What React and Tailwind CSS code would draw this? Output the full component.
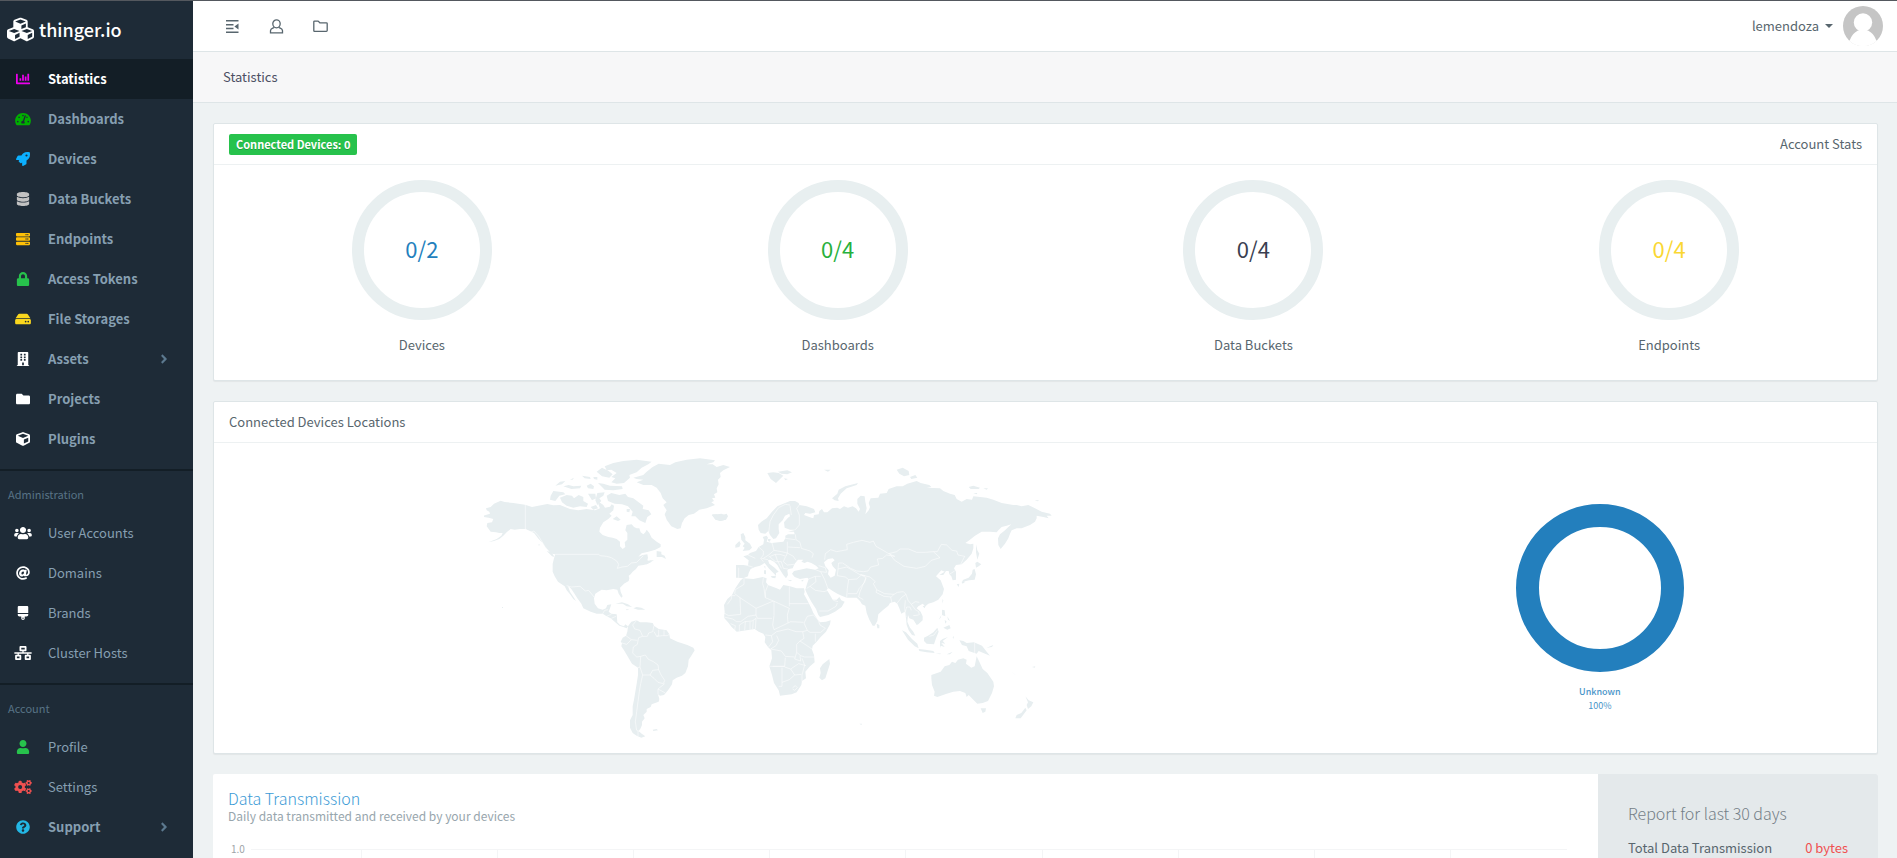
import {
  FaChartBar, FaTachometerAlt, FaRocket, FaDatabase, FaServer, FaLock, FaHdd, FaBuilding, FaFolder,
  FaCube, FaUsers, FaAt, FaBrush, FaNetworkWired, FaUser, FaCogs, FaQuestionCircle, FaAngleRight, FaCubes,
} from "react-icons/fa";

const groups = [
  {
    items: [
      { label: "Statistics", icon: FaChartBar, color: "text-[#ee00ee]", bold: true, active: true },
      { label: "Dashboards", icon: FaTachometerAlt, color: "text-[#00b000]", bold: true },
      { label: "Devices", icon: FaRocket, color: "text-[#0bb0ff]", bold: true },
      { label: "Data Buckets", icon: FaDatabase, color: "text-[#c2c2c2]", bold: true },
      { label: "Endpoints", icon: FaServer, color: "text-[#ffc107]", bold: true },
      { label: "Access Tokens", icon: FaLock, color: "text-[#27c24c]", bold: true },
      { label: "File Storages", icon: FaHdd, color: "text-[#fad71e]", bold: true },
      { label: "Assets", icon: FaBuilding, color: "text-white", bold: true, more: true },
      { label: "Projects", icon: FaFolder, color: "text-white", bold: true },
      { label: "Plugins", icon: FaCube, color: "text-white", bold: true },
    ],
  },
  {
    title: "Administration",
    items: [
      { label: "User Accounts", icon: FaUsers, color: "text-white" },
      { label: "Domains", icon: FaAt, color: "text-white" },
      { label: "Brands", icon: FaBrush, color: "text-white" },
      { label: "Cluster Hosts", icon: FaNetworkWired, color: "text-white" },
    ],
  },
  {
    title: "Account",
    items: [
      { label: "Profile", icon: FaUser, color: "text-[#27c24c]" },
      { label: "Settings", icon: FaCogs, color: "text-[#f05050]" },
      { label: "Support", icon: FaQuestionCircle, color: "text-[#23b7e5]", bold: true, more: true },
    ],
  },
];

const stats = [
  { label: "Devices", value: "0/2", color: "text-[#237fbd]" },
  { label: "Dashboards", value: "0/4", color: "text-[#27b03c]" },
  { label: "Data Buckets", value: "0/4", color: "text-[#3a3f51]" },
  { label: "Endpoints", value: "0/4", color: "text-[#fad733]" },
];

function NavItem({ item }) {
  const Icon = item.icon;
  return (
    <li>
      <a
        href="#"
        aria-current={item.active ? "page" : undefined}
        className={`flex h-10 items-center text-[13px] ${item.active ? "bg-[#131e26] text-white" : "text-[#869fb1]"} ${item.bold ? "font-bold" : ""}`}
      >
        <span className={`flex w-[46px] justify-center ${item.color}`}>
          <Icon className="h-3.5 w-[18px]" />
        </span>
        <span className="ml-0.5 flex-1">{item.label}</span>
        {item.more && <FaAngleRight size={14} className="mr-[22px] text-[#5c798f]" />}
      </a>
    </li>
  );
}

function Sidebar() {
  return (
    <nav className="w-[193px] shrink-0 overflow-hidden bg-[#1e2b37]">
      <a href="#" className="flex h-[58px] items-center gap-[5px] pb-0.5 pl-[7px] text-white">
        <FaCubes size={27} />
        <span className="text-[18px] font-medium">thinger.io</span>
      </a>
      {groups.map((group, i) => (
        <div key={i} className={i ? "mt-2.5 border-t-2 border-[#131e26]" : ""}>
          {group.title && (
            <h2 className="flex h-[42px] items-center px-2 pt-1 text-[11px] text-[#587386]">{group.title}</h2>
          )}
          <ul>
            {group.items.map((item) => (
              <NavItem key={item.label} item={item} />
            ))}
          </ul>
        </div>
      ))}
    </nav>
  );
}

function Header() {
  return (
    <header className="flex h-[51px] shrink-0 items-center justify-between border-b border-[#dee5e7] bg-white pr-3.5 pl-8 text-[#58666e]">
      <div className="flex items-center gap-[29px]">
        <button type="button" aria-label="Collapse menu">
          <svg width="15" height="15" viewBox="0 0 15 15" fill="currentColor">
            <path d="M1 1h12.5v1.4H1zM1 5h7.5v1.4H1zM1 8.8h7.5v1.4H1zM1 12.6h12.5V14H1zM13.5 4.6v6L9.4 7.6z" />
          </svg>
        </button>
        <button type="button" aria-label="User">
          <svg width="15" height="15" viewBox="0 0 15 15" fill="none" stroke="currentColor" strokeWidth="1.3">
            <ellipse cx="7.5" cy="4.8" rx="3.7" ry="4" />
            <path d="M5.2 8.2C4.6 9.4 1.7 9.2 1.5 11.6v2.2h12v-2.2c-.2-2.4-3.1-2.2-3.7-3.4" />
          </svg>
        </button>
        <button type="button" aria-label="Files">
          <svg width="15" height="15" viewBox="0 0 15 15" fill="none" stroke="currentColor" strokeWidth="1.3" strokeLinejoin="round">
            <path d="M.8 2.9q0-.8.8-.8h3.6l1.6 1.7h6.6q.8 0 .8.8v7q0 .8-.8.8H1.6q-.8 0-.8-.8z" />
          </svg>
        </button>
      </div>
      <button type="button" className="flex items-center gap-2.5 text-[13px]">
        <span className="flex items-center gap-1.5">
          lemendoza
          <svg width="8" height="4" viewBox="0 0 8 4" fill="currentColor"><path d="M0 0h8L4 4z" /></svg>
        </span>
        <svg width="40" height="40" viewBox="0 0 40 40">
          <defs><clipPath id="avatar"><circle cx="20" cy="20" r="20" /></clipPath></defs>
          <g clipPath="url(#avatar)">
            <rect width="40" height="40" fill="#c5c5c5" />
            <circle cx="20" cy="16.5" r="9.2" fill="#fff" />
            <path d="M6.5 35C8.5 29 12 26 15 24.5h10c3 1.500 6.500 4.500 8.500 10.500V40h-27z" fill="#fff" />
            <path d="M0 34.500h40V40H0z" fill="#fff" />
          </g>
        </svg>
      </button>
    </header>
  );
}

function Gauge({ stat }) {
  return (
    <div className="flex flex-col items-center gap-3.5">
      <div className={`flex size-[140px] items-center justify-center rounded-full border-12 border-[#e8eff0] pb-1 text-[22px] ${stat.color}`}>
        {stat.value}
      </div>
      <span className="text-[13px] leading-[22px]">{stat.label}</span>
    </div>
  );
}

function WorldMap() {
  return (
    <svg className="h-[280px] w-[568px]" viewBox="42 39 1704 840" fill="#e7eef0" fillRule="evenodd" role="img" aria-label="World map">
      <path d="M40 212L60 206 58 200 50 196 48 190 62 186 72 176 92 167 104 171 130 174 165 179 186 186 205 182 232 177 250 181 270 180 285 186 300 192 325 196 350 192 375 196 390 190 385 178 388 172 400 180 405 188 420 185 425 178 432 182 430 196 418 206 425 212 415 222 400 232 390 248 388 260 398 270 415 276 428 278 440 282 450 290 450 304 458 312 466 306 464 292 472 284 472 264 466 256 470 240 485 238 492 246 500 250 508 250 512 262 520 268 526 262 530 254 538 264 545 278 560 290 572 298 572 306 556 314 535 320 515 325 505 335 518 330 532 328 534 338 532 346 545 350 550 348 530 358 520 360 505 362 498 372 488 380 482 388 476 392 478 400 476 408 462 416 450 428 452 440 458 454 454 458 446 446 442 434 430 432 418 434 410 436 395 434 385 440 376 446 372 460 374 476 384 490 398 494 408 490 412 480 424 478 420 490 416 500 424 506 440 508 441 520 442 532 450 540 462 544 466 538 474 544 470 550 460 546 448 542 434 530 422 520 410 514 398 506 380 506 362 500 340 490 334 476 322 460 312 444 304 432 298 426 294 424 300 440 312 458 318 468 310 462 300 448 290 436 284 424 264 410 254 394 248 380 248 356 252 340 256 328 246 326 236 318 228 310 218 294 206 282 192 264 180 258 166 252 150 252 134 254 122 252 110 262 100 272 88 282 72 288 55 292 80 282 94 272 98 264 88 264 78 262 62 260 56 252 50 244 52 234 66 232 70 222 56 218 42 216z" />
      <path d="M474 544L484 530 500 526 510 532 530 532 548 534 552 542 566 552 590 556 598 568 600 580 622 590 652 600 670 608 674 616 664 632 656 644 654 664 646 684 636 692 620 698 608 706 606 718 594 736 582 750 570 752 564 748 568 762 566 770 545 778 542 786 530 792 530 800 520 810 524 820 516 830 516 840 512 850 506 858 515 866 526 874 514 878 500 872 488 864 480 848 480 826 488 810 488 784 492 764 496 740 500 716 504 690 504 668 486 656 474 636 462 616 454 604 456 594 452 590 458 578 468 572 472 560z" />
      <path d="M490 98L520 90 530 80 548 66 566 56 600 60 616 52 650 44 690 40 735 46 730 52 710 58 728 58 740 66 760 60 780 66 760 76 750 84 752 96 744 104 746 118 740 130 742 142 732 148 736 158 726 160 732 168 724 172 735 180 710 190 688 194 672 206 656 210 644 220 636 234 632 250 622 252 604 244 590 224 584 208 590 196 580 180 590 172 578 160 572 144 560 128 545 120 520 120 500 112 520 104 500 102z" />
      <path d="M404 64L430 54 460 48 500 44 545 50 535 58 515 68 500 82 478 90 480 98 462 114 440 116 424 112 436 100 424 96 440 84 424 74 410 76zM380 80L396 68 416 78 428 88 418 98 396 94zM384 114L400 116 420 122 456 124 458 132 430 136 404 134 396 126zM410 152L424 144 448 150 466 146 474 156 490 160 504 170 520 182 518 192 536 196 544 208 532 216 526 234 508 226 496 214 484 214 488 200 474 184 456 178 434 176 414 168zM428 222L440 214 452 224 444 228zM470 192L480 192 478 202 470 200zM242 152L250 138 280 142 286 148 268 152 256 168 240 164zM270 158L290 150 306 152 312 160 326 150 340 156 340 168 354 176 350 186 330 184 310 188 290 182 276 172zM256 122L270 110 286 108 276 118zM280 124L296 120 310 124 334 122 330 130 304 132zM300 104L312 98 308 104zM336 92L360 96 362 102 344 100zM350 122L362 116 372 124 370 132 354 130zM354 146L376 146 378 160 366 166zM382 144L404 142 400 152 388 160 394 168 382 180 376 166zM370 96L382 96 382 104 372 102zM362 186L378 180 384 190 370 194zM725 210L740 208 750 212 770 206 774 214 768 224 750 228 736 224 730 216zM560 318L574 320 574 328 584 332 588 342 576 336 560 336zM524 354L540 346 552 346 530 358zM436 476L456 472 474 478 486 486 470 484 458 476zM490 490L500 486 514 488 526 494 504 494zM468 492L478 494 470 496zM548 854L560 852 564 856 550 858zM206 296L210 300 206 302zM96 486h3v3h-3zM230 318L244 322 254 336 246 334z" />
      <g transform="translate(690)">
        <path d="M174 240L184 230 200 220 216 200 232 184 250 176 270 168 285 168 296 174 298 180 320 184 342 192 346 202 330 206 316 204 312 210 322 214 334 218 340 220 342 210 356 208 358 198 366 192 372 202 382 202 396 190 412 188 420 192 432 184 444 188 458 184 468 190 476 200 480 192 472 176 472 162 482 152 494 154 496 170 500 190 496 208 506 196 510 186 506 174 512 160 535 158 540 146 560 144 566 132 590 124 608 124 622 116 650 108 662 114 688 120 694 126 680 128 720 130 730 138 750 146 764 150 770 162 785 170 800 162 816 164 820 154 860 158 880 164 905 174 940 180 950 180 965 184 985 180 1005 190 1025 200 1050 206 1055 212 1040 212 1046 220 1030 216 1010 212 1010 220 1005 230 990 240 965 250 950 250 935 256 930 266 925 280 915 296 902 312 895 300 894 280 900 268 915 256 925 246 934 238 920 242 905 246 895 256 890 262 870 260 845 260 825 272 808 286 796 294 810 298 820 296 820 310 815 326 800 344 785 358 768 360 762 370 768 380 768 404 758 406 754 394 748 388 746 378 738 378 730 390 718 390 734 380 724 376 708 394 722 406 732 432 728 448 715 464 700 472 685 476 676 484 668 476 655 484 650 490 662 500 668 514 668 526 655 538 650 540 640 524 628 520 624 510 622 530 630 548 640 560 646 572 636 570 626 556 620 540 618 520 614 500 604 506 598 490 592 476 584 470 570 474 565 482 550 494 535 508 532 528 524 542 518 542 508 524 500 504 496 482 486 478 480 468 470 458 440 458 425 452 412 446 398 438 386 430 380 434 390 450 398 464 410 464 418 456 424 466 434 470 425 486 405 500 385 510 360 516 355 510 348 492 334 470 322 448 316 434 320 420 326 402 322 398 300 402 284 396 276 386 282 378 300 374 320 370 345 374 356 370 348 362 334 354 322 350 314 354 304 350 310 344 294 344 284 356 278 370 266 372 262 376 264 390 258 400 250 390 240 374 232 360 222 350 210 344 204 346 208 356 224 368 236 380 228 384 228 392 220 384 206 370 194 354 180 362 165 366 152 372 146 384 144 394 130 400 116 398 108 398 108 380 108 360 130 360 144 362 146 346 130 334 144 330 150 324 168 318 176 306 190 298 192 284 188 276 200 272 204 278 200 290 215 294 235 292 250 290 256 280 256 272 264 268 284 268 282 260 264 260 288 254 270 254 254 248 252 232 264 218 270 214 268 206 255 212 248 226 236 238 236 252 238 264 228 280 220 282 210 270 205 258 196 266 182 264 176 254zM372 352L384 342 398 340 404 346 394 354 398 364 408 374 404 392 392 398 384 388 386 376 376 364z" />
        <path d="M122 406L130 400 160 402 188 396 200 400 198 412 204 420 230 430 240 434 250 420 270 424 290 430 312 430 314 440 312 448 322 466 334 490 340 504 352 522 360 532 378 530 392 526 390 538 378 560 362 576 350 590 338 602 336 614 342 630 344 652 330 664 316 680 318 700 306 708 304 720 290 742 275 748 240 752 236 736 222 714 216 690 208 664 216 640 214 616 204 606 194 592 196 576 190 566 176 560 164 552 140 556 110 560 95 546 84 532 72 518 74 500 72 480 82 462 96 450 106 430z" />
        <path d="M388 642L390 656 376 700 366 706 358 698 362 684 360 670 368 658zM694 700L694 690 722 680 734 664 748 660 756 650 766 654 774 644 790 640 800 644 798 656 814 668 824 664 830 634 838 650 848 672 862 684 880 710 882 724 876 744 864 768 848 774 832 776 820 764 806 750 800 756 796 744 780 738 760 740 740 746 712 756 702 752 704 740 696 720zM842 790L858 790 856 800 848 804zM976 754L986 766 1000 772 994 784 984 792 980 780 984 772zM976 788L980 796 962 820 946 820 950 810 964 804zM202 84L220 82 236 84 250 92 238 104 228 114 212 102zM234 80L262 76 276 82 262 88 244 86zM252 100L264 102 256 106zM372 74L392 74 384 80zM396 160L412 146 416 134 436 124 474 114 470 120 440 130 422 146 414 160 416 168 404 166zM590 74L608 68 626 78 628 90 612 94 598 86zM630 96L646 90 652 98 634 102zM806 126L820 122 840 128 836 132 812 132zM850 130L864 130 860 134zM820 144L832 144 830 148zM1004 166L1018 166 1012 169zM36 208L52 208 64 206 82 212 76 224 62 228 46 222zM122 268L130 264 136 276 136 286 150 296 156 308 148 316 128 318 134 308 128 304 134 296 124 284zM106 300L118 288 122 296 118 306 106 308zM204 282L212 282 210 290 204 288zM212 394L228 392 226 400 216 398zM192 376L198 376 198 388 192 386zM192 364L196 364 196 372zM262 404L276 406 272 409zM304 406L312 404 306 410zM828 298L832 316 838 326 832 344 828 322zM826 354L832 350 844 358 836 364 828 368zM824 372L828 388 824 404 808 406 798 408 784 412 790 404 806 398 816 386 818 374zM770 418L778 416 776 426zM784 410L796 410 788 416zM668 484L678 480 674 490zM728 462L730 466 726 476zM530 536L538 540 538 550 532 550zM606 556L618 562 636 582 652 596 656 610 644 604 624 584zM656 612L676 614 700 618 704 624 680 622 658 618zM672 578L684 572 700 562 712 548 716 560 708 580 702 598 680 596 672 588zM726 494L734 496 736 514 726 510zM742 514L750 528 744 524zM730 548L748 540 752 550 742 554zM734 524L740 530 736 536zM724 510L722 518 716 524zM720 588L728 582 744 576 728 588 736 596 724 594 734 606 722 602 720 610zM778 586L790 588 800 594 822 592 846 602 860 620 870 632 850 624 836 618 830 626 806 618 800 604 786 600zM706 624L724 626 720 628zM740 628L758 620 750 628zM758 576L762 574 760 582zM764 596L774 596zM860 608L880 600 876 606zM888 608L894 612zM934 680L948 690 944 688zM996 666L1006 664 1004 668zM478 836L486 836 484 840zM1050 228L1062 232z" />
      </g>
      <g fill="none" stroke="#fff" strokeWidth="1.6" strokeLinejoin="round">
        <path d="M166 179V252M166 252L180 262 192 258 206 274 216 290 224 304 236 318M256 328H386L390 332 410 334 424 338 440 348 446 358 442 370 456 366 472 364 484 354 500 352 512 340 520 332M290 422L304 426 330 424 346 438 356 436 372 456M398 506L404 496 414 494M410 514L424 508M424 520L438 514M446 534L442 530M500 526L488 540 494 552 510 556 518 574 506 578 502 598 490 606 488 624 500 636 512 634 510 666 504 668M456 594L470 598 484 584 502 586M468 572L484 584M518 574L532 574 536 564 548 560 552 542M552 560L560 574 566 572 566 554M560 574L578 572 592 572 598 568M582 556V572M512 634L526 630 534 642 550 650 564 660 566 674 548 676 540 690 518 690 510 666M566 674L572 688 584 706 580 716 564 712 552 700 540 690M518 690L512 716 508 740 504 770 500 800 496 830 500 856 516 862M564 748L564 732 584 716M564 732L586 744M504 858V874" />
        <g transform="translate(690)">
          <path d="M206 264L210 230 220 210 236 188 256 178 270 180M270 182L274 210M298 180L290 190 298 210 298 240 286 254M286 268L288 284 300 292 304 310 330 318 340 326 336 338M176 306L190 318 190 330 182 340 190 350M216 294L222 316 206 330 190 340M222 316L244 320 262 324 258 334 240 328 226 328 206 336M262 290V324M256 280L286 284M264 306L300 308M262 324L280 334 288 346M256 336L250 350 262 360 282 358M210 336L226 350 244 350 250 370 264 372M226 328L232 346 244 370M116 368V398M144 362L158 366M144 330L166 340M184 340L204 344M356 362L376 368 380 382 362 380 346 374M362 380L374 404 380 420 384 432M376 326L392 314 410 320 442 314 440 298 460 292 486 286 510 292 520 288 528 304 546 314 566 326 584 334 560 330 548 340 532 342 536 360 512 366 504 378 490 380 470 378 452 370 428 354 416 354 414 372 440 366 458 376 478 388 496 392M376 326L374 344M566 326L590 320 600 312 626 312 650 322 676 322 700 320 720 338 694 346 676 364 650 370 612 364 584 346 570 328M700 320L712 320 724 298 740 300 756 316 770 318 774 330 794 334 782 358M414 372L412 392 436 396 446 404 442 430 440 458M446 404L470 402 484 390 498 398 494 412 478 430 470 446 444 446M484 390L510 396 526 410 520 416 530 434 554 446 582 448 592 442 610 440 618 448 606 456 590 476M498 398L480 440 476 456 490 464M530 434L528 442 552 454 574 456 582 448M572 456L576 474M618 448L624 466 634 478 646 470 658 472M616 466L614 490 618 516M634 478L646 494 656 500 658 510M634 496L630 486 620 486 616 500M640 512L656 510M326 402L346 394 362 394M346 394L348 410 330 424 320 430M330 424L346 436 372 440 384 436M358 498L384 498 408 484 412 474M414 470L400 466M748 388L764 378M688 574L702 570 712 556M824 592V626" />
          <path d="M132 402V418L106 434 104 446M106 452H90M94 452V462L82 478M104 446L120 458 168 490 220 468 196 458 192 430 188 416 190 398M120 458L122 508 86 512 72 504M204 420L196 440 196 458M268 424V484M268 476H326M220 468L268 490 262 510 264 534 222 554 218 540 222 512 222 468M168 490L168 510 144 514 122 530 110 530 98 522 72 516M168 510L172 520 216 520M166 552L168 520 156 528 134 530 118 540M134 556L136 530M150 554L150 530M158 552L160 526M104 556L106 542 92 536M118 558L118 540M196 570L214 572 230 560 264 552 288 560 308 560 322 556 312 534 322 514 340 510 354 524M264 534L272 530 310 532M354 524L360 540 376 550 362 562 330 562 322 556M346 566V590M308 560L312 580 300 588 336 612M300 588L290 598 290 622 302 632 314 636 342 636M290 622L284 642 302 648 300 632M214 572L218 590 206 606M230 572L236 586 228 602 212 612 244 618 256 634 284 636M218 664L254 664 256 638M208 664H254M246 668V724L236 724M246 712L268 704 284 690 304 688M284 690L272 672 254 666M272 672L296 656 318 662M306 640L314 660 306 690 306 710M278 728L286 722 292 728 284 736 278 732" />
        </g>
      </g>
    </svg>
  );
}

function PanelHeading({ children }) {
  return <div className="flex h-[41px] items-center justify-between border-b border-[#edf1f2] px-[15px] text-[13px]">{children}</div>;
}

const panel = "rounded-xs border border-[#dee5e7] bg-white shadow-[0_1px_1px_rgba(0,0,0,0.05)]";

const gridLines = [1, 2, 3, 4, 5, 6, 7, 8, 9];

export default function App() {
  return (
    <div className="flex h-screen overflow-hidden border-t border-[#54585e] bg-[#eef2f3] font-['Noto_Sans_CJK_JP','Noto_Sans',sans-serif] leading-5 text-[#58666e]">
      <Sidebar />
      <div className="flex min-w-0 flex-1 flex-col">
        <Header />
        <div className="flex h-[51px] shrink-0 items-center border-b border-[#dee5e7] bg-[#f7f7f8] px-[30px]">
          <h1 className="text-[13px] text-[#4c4f63]">Statistics</h1>
        </div>
        <main className="flex flex-1 flex-col gap-5 overflow-y-auto py-5 pr-[19px] pl-5 [scrollbar-width:none]">
          <section className={`${panel} shrink-0`}>
            <PanelHeading>
              <span className="rounded-xs bg-[#27c24c] px-[7px] text-[11px] leading-[21px] font-bold text-white [text-shadow:0_1px_0_rgba(0,0,0,0.2)]">
                Connected Devices: 0
              </span>
              <span>Account Stats</span>
            </PanelHeading>
            <div className="grid grid-cols-4 pt-[15px] pb-6">
              {stats.map((stat) => (
                <Gauge key={stat.label} stat={stat} />
              ))}
            </div>
          </section>

          <section className={`${panel} shrink-0`}>
            <PanelHeading>
              <h2>Connected Devices Locations</h2>
            </PanelHeading>
            <div className="grid h-[310px] grid-cols-3">
              <div className="col-span-2 flex justify-center pt-[15px]">
                <WorldMap />
              </div>
              <div className="flex flex-col items-center pt-[61px] text-[9px] leading-[14px] text-[#4a95c9]">
                <div className="mb-[13px] size-[168px] rounded-full border-23 border-[#237fbd]" />
                <span className="font-medium">Unknown</span>
                <span>100%</span>
              </div>
            </div>
          </section>

          <section className="flex h-[360px] shrink-0 rounded-xs bg-white">
            <div className="min-w-0 flex-1 px-[15px] pt-3.5">
              <h2 className="text-[16px] font-light text-[#3c9bd6]">Data Transmission</h2>
              <p className="text-[12px] leading-4 text-[#98a6ad]">Daily data transmitted and received by your devices</p>
              <div className="flex pt-[15px] pr-4">
                <span className="w-[23px] pl-[3px] text-[10px] text-[#a0a4a8]">1.0</span>
                <div className="mt-2.5 grid h-[240px] flex-1 grid-cols-[110fr_repeat(8,136fr)_117fr] border-t border-[#f4f5f6]">
                  <div />
                  {gridLines.map((n) => (
                    <div key={n} className="border-l border-[#f4f5f6]" />
                  ))}
                </div>
              </div>
            </div>
            <aside className="w-[280px] rounded-r-xs bg-[#e4e9eb] px-[30px] pt-[29px]">
              <h2 className="text-[16px] font-light text-[#748087]">Report for last 30 days</h2>
              <dl className="flex justify-between pt-[15px] text-[13px]">
                <dt>Total Data Transmission</dt>
                <dd className="text-[#f05050]">0 bytes</dd>
              </dl>
            </aside>
          </section>
        </main>
      </div>
    </div>
  );
}
